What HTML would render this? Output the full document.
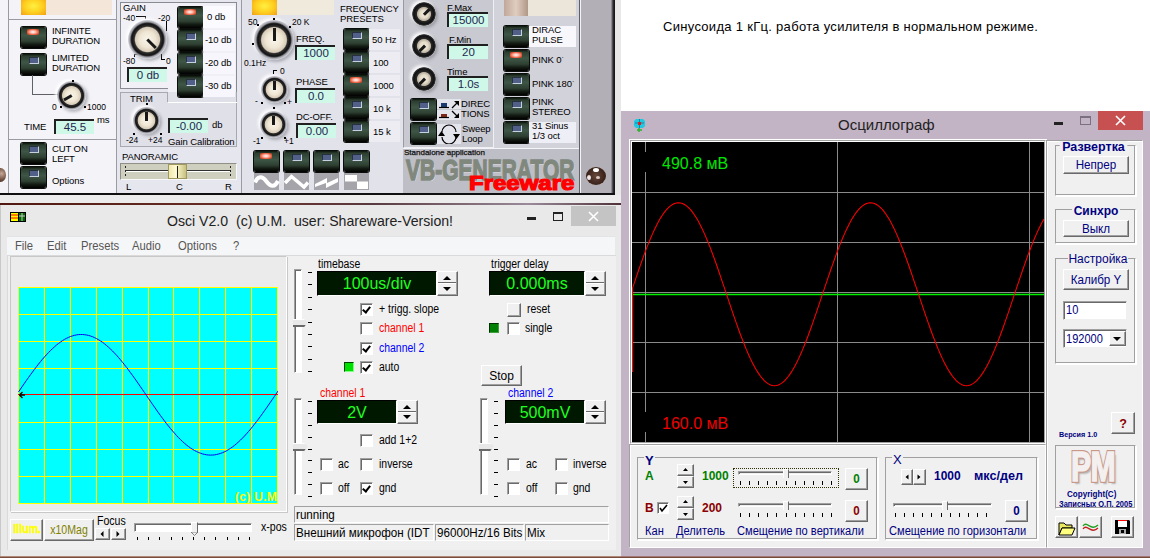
<!DOCTYPE html>
<html><head><meta charset="utf-8">
<style>
*{box-sizing:border-box}
body{margin:0;width:1150px;height:558px;overflow:hidden;position:relative;background:#ececec;font-family:"Liberation Sans",sans-serif}
.a{position:absolute}
.t{position:absolute;white-space:nowrap;line-height:1}
.grp{position:absolute;border:1px solid #a0a0a0;border-right-color:#fff;border-bottom-color:#fff;box-shadow:inset -1px -1px 0 #a0a0a0,1px 1px 0 #fff}
.gtb{font-size:12px;font-weight:bold;color:#000080;background:#f0f0f0}
.gt{font-size:12px;color:#000080;background:#f0f0f0;transform:scaleX(0.925);transform-origin:0 0}
.btn{position:absolute;background:#f0f0f0;border:1px solid #fff;border-right-color:#696969;border-bottom-color:#696969;box-shadow:inset -1px -1px 0 #a0a0a0}
.btn span{position:absolute;left:0;right:0;top:2px;text-align:center;font-size:12px;color:#000080;line-height:1;white-space:nowrap;transform:scaleX(0.97)}
.trk{position:absolute;height:4px;border:1px solid #a0a0a0;border-right-color:#fff;border-bottom-color:#fff;box-shadow:inset 1px 1px 0 #696969}
.thm{position:absolute;width:6px;height:9px;background:#f0f0f0;border:1px solid #fff;border-right-color:#696969;border-bottom:none}
.tck{position:absolute;height:4px;background:repeating-linear-gradient(90deg,#000 0 1px,transparent 1px 9.1px)}
.mn{top:35px;font-size:12.5px;color:#555;transform:scaleX(0.9);transform-origin:0 0}
.lb{font-size:12px;color:#000;transform:scaleX(0.87);transform-origin:0 0}
.wb{position:absolute;background:#f0f0f0;border:1px solid #fff;border-right-color:#696969;border-bottom-color:#696969;box-shadow:inset -1px -1px 0 #a0a0a0}
.wb span{position:absolute;left:0;right:0;top:4px;text-align:center;line-height:1;white-space:nowrap}
.lcd{position:absolute;background:#001800;border:1px solid #000;border-right-color:#fff;border-bottom-color:#fff}
.lcd span{position:absolute;left:0;right:0;top:4px;text-align:center;font-size:16px;color:#20ff20;line-height:1;white-space:nowrap}
.spn{position:absolute;width:21px;background:linear-gradient(180deg,#f0f0f0 0,#f0f0f0 calc(50% - 1px),#696969 calc(50% - 1px),#696969 50%,#fff 50%,#fff calc(50% + 1px),#f0f0f0 calc(50% + 1px));border:1px solid #fff;border-right-color:#696969;border-bottom-color:#696969}
.cb{position:absolute;width:13px;height:13px;background:#fff;border:1px solid #a0a0a0;border-right-color:#fff;border-bottom-color:#fff;box-shadow:inset 1px 1px 0 #696969}
.vs{position:absolute;width:8px;background:#fff;border:1px solid #a0a0a0;border-right-color:#fff;border-bottom-color:#fff;box-shadow:inset 1px 1px 0 #696969}
.vth{position:absolute;width:15px;height:8px;background:linear-gradient(180deg,#fff 0 1px,#e8e8e8 1px 6px,#696969 6px 8px);clip-path:polygon(0 0,70% 0,100% 35%,75% 100%,0 100%)}
.vtk{position:absolute;width:4px}
.sb{position:absolute;overflow:hidden;background:#f0f0f0;border:1px solid #a0a0a0;border-right-color:#fff;border-bottom-color:#fff}
.sb span{position:absolute;left:1px;top:2px;font-size:12px;color:#000;line-height:1;white-space:nowrap;transform:scaleX(0.97);transform-origin:0 0}
.ck::after{content:"";position:absolute;left:3px;top:1px;width:3px;height:6px;border:solid #000;border-width:0 2px 2px 0;transform:rotate(38deg)}
.spn::before,.spn::after{content:"";position:absolute;left:5px;width:0;height:0;border-left:4.5px solid transparent;border-right:4.5px solid transparent}
.spn::before{top:4px;border-bottom:4.5px solid #000}
.spn::after{bottom:4px;border-top:4.5px solid #000}
.spn{box-shadow:inset -1px -1px 0 #a0a0a0}
.vt{font-size:9.5px;color:#000;line-height:10px;letter-spacing:-0.1px}
.vs9{font-size:8.5px;color:#000}
.vbb{position:absolute;width:25px;height:21px;border-radius:2px;background:linear-gradient(180deg,#0c140c 0,#2c3e30 10%,#3e5646 40%,#2e4032 68%,#141c14 82%,#000 100%);box-shadow:0 0 0 1px #0a0e0a}
.vbb::after{content:"";position:absolute;left:8px;top:3px;width:8px;height:5px;background:#506088;border:1px solid #c8d0e0;border-left-color:#283040;border-top-color:#283040}
.vbb.on::after{left:6px;top:2px;width:12px;height:6px;background:radial-gradient(ellipse,#fff 0,#ffb0a0 35%,#e05030 70%,transparent 100%);border:none}
.kn{position:absolute;border-radius:50%;background:radial-gradient(circle closest-side at 50% 50%,#faf6ec 0,#efe6d4 40%,#d8ccb8 62%,#303030 68%,#141414 80%,#2a2a2a 84%,#9a9aa2 90%,rgba(200,200,210,0.6) 100%);box-shadow:-2px -2px 3px rgba(255,255,255,0.9),2px 2px 3px rgba(110,110,120,0.45)}
.kn i{position:absolute;left:50%;top:20%;width:3px;height:32%;margin-left:-1.5px;background:#181818;transform-origin:50% 94%}
.dt{width:2px;height:2px;background:#000}
.vin{position:absolute;background:#d0f8e8;border-left:2px solid #202020;border-top:2px solid #202020}
.vin span{position:absolute;left:0;right:0;top:1px;text-align:center;font-size:11.5px;color:#202850;line-height:1;white-space:nowrap}
.kn.dk{background:radial-gradient(circle closest-side at 50% 50%,#f4eee0 0,#e4dac8 35%,#b8b0a0 55%,#282828 62%,#101010 85%,#3a3a3a 95%,rgba(150,150,160,0.5) 100%)}
</style></head><body>
<!-- VB generator panel -->
<div class="a" style="left:0;top:0;width:621px;height:195px;background:#d9d9e1;overflow:hidden">
 <!-- column backgrounds -->
 <div class="a" style="left:0;top:0;width:8px;height:193px;background:#f4f4f8"></div>
 <div class="a" style="left:8px;top:0;width:109px;height:193px;background:#f3f3f8;border-left:1px solid #9a9aa2;border-right:1px solid #9a9aa2"></div>
 <div class="a" style="left:8px;top:19px;width:109px;height:1px;background:#9a9aa2"></div>
 <div class="a" style="left:8px;top:139px;width:109px;height:1px;background:#9a9aa2"></div>
 <div class="a" style="left:117px;top:0;width:125px;height:193px;background:#e6e6ee"></div>
 <div class="a" style="left:241px;top:0;width:1px;height:193px;background:#9a9aa2"></div>
 <div class="a" style="left:242px;top:0;width:161px;height:193px;background:#e2e2ea"></div>
 <div class="a" style="left:403px;top:0;width:91px;height:148px;background:#c9c9d1;border-left:1px solid #9a9aa2;border-right:1px solid #f0f0f4;border-bottom:1px solid #f0f0f4"></div>
 <div class="a" style="left:403px;top:148px;width:177px;height:45px;background:#bebec6;border-top:1px solid #f4f4f8"></div>
 <div class="a" style="left:494px;top:0;width:86px;height:148px;background:#d2d2da;border-right:1px solid #606068"></div>
 <div class="a" style="left:579px;top:148px;width:1px;height:45px;background:#606068"></div><div class="a" style="left:580px;top:0;width:34px;height:193px;background:linear-gradient(90deg,#f4f4f8 0 1px,#b2b0b6 1px 31px,#8a8a90 31px 32px,#505058 32px 33px,#282828 33px)"></div>
 <div class="a" style="left:614px;top:0;width:1px;height:195px;background:#181818"></div>
 <div class="a" style="left:0;top:193px;width:616px;height:2px;background:#101010"></div>
 <div class="a" style="left:615px;top:0;width:6px;height:195px;background:#e8e8e8"></div>

 <!-- column 1 -->
 <div class="a" style="left:21px;top:0;width:25px;height:15px;background:radial-gradient(ellipse at 50% 40%,#fff040 0,#ffd020 50%,#f0a018 100%)"></div>
 <div class="a" style="left:46px;top:0;width:66px;height:15px;background:#f4e6d8"></div>
 <div class="vbb on" style="left:21px;top:27px"></div>
 <div class="vbb" style="left:21px;top:54px"></div>
 <div class="t vt" style="left:52px;top:26px">INFINITE<br>DURATION</div>
 <div class="t vt" style="left:52px;top:53px">LIMITED<br>DURATION</div>
 <div class="a" style="left:32px;top:75px;width:27px;height:20px;border-left:1px solid #606068;border-bottom:1px solid #606068"></div>
 <div class="kn" style="left:57px;top:81px;width:29px;height:29px"><i style="transform:rotate(-120deg)"></i></div>
 <div class="t vs9" style="left:52px;top:103px">0</div>
 <div class="t vs9" style="left:87px;top:103px">1000</div>
 <div class="a dt" style="left:60px;top:106px"></div><div class="a dt" style="left:84px;top:106px"></div><div class="a dt" style="left:72px;top:80px"></div>
 <div class="t vt" style="left:24px;top:122px">TIME</div>
 <div class="vin" style="left:54px;top:119px;width:40px;height:15px"><span>45.5</span></div>
 <div class="t vt" style="left:97px;top:115px">ms</div>
 <div class="vbb" style="left:21px;top:143px"></div>
 <div class="vbb" style="left:21px;top:167px"></div>
 <div class="t vt" style="left:52px;top:144px">CUT ON<br>LEFT</div>
 <div class="t vt" style="left:52px;top:176px">Options</div>
 <div class="a" style="left:-5px;top:168px;width:11px;height:14px;border-radius:50%;background:radial-gradient(circle at 60% 40%,#c8a898 0,#6a4a3a 60%,#3a2a20 100%)"></div>

 <!-- column 2 -->
 <div class="a" style="left:120px;top:2px;width:117px;height:87px;border:1px solid #8a8a92;border-bottom:none;background:#f0f0f6"></div>
 <div class="a" style="left:120px;top:88px;width:49px;height:1px;background:#8a8a92"></div>
 <div class="a" style="left:168px;top:88px;width:1px;height:14px;background:#8a8a92"></div>
 <div class="a" style="left:168px;top:88px;width:69px;height:14px;background:#f0f0f6;border-right:1px solid #8a8a92"></div>
 <div class="a" style="left:168px;top:101px;width:69px;height:1px;background:#8a8a92"></div>
 <div class="a" style="left:120px;top:92px;width:117px;height:55px;border:1px solid #a8a8b0;border-top:none;background:#e0e0e8"></div>
 <div class="a" style="left:120px;top:92px;width:48px;height:1px;background:#a8a8b0"></div>
 <div class="a" style="left:168px;top:102px;width:69px;height:1px;background:#fff"></div>
 <div class="a" style="left:120px;top:92px;width:48px;height:10px;background:#e0e0e8;border-left:1px solid #a8a8b0;border-top:1px solid #a8a8b0;border-right:1px solid #a8a8b0"></div>
 <div class="t vt" style="left:123px;top:3px">GAIN</div>
 <div class="t vs9" style="left:123px;top:14px">-40</div>
 <div class="t vs9" style="left:158px;top:14px">-20</div>
 <div class="t vs9" style="left:123px;top:57px">-80</div>
 <div class="t vs9" style="left:166px;top:57px">0</div>
 <div class="a" style="left:136px;top:16px;width:10px;height:3px;border-top:1px solid #000;border-right:1px solid #000"></div>
 <div class="a" style="left:166px;top:21px;width:1px;height:10px;background:#000"></div>
 <div class="a" style="left:134px;top:54px;width:4px;height:3px;border-top:1px solid #000;border-left:1px solid #000"></div>
 <div class="a" style="left:161px;top:54px;width:4px;height:6px;border-bottom:1px solid #000;border-left:1px solid #000"></div>
 <div class="kn" style="left:128px;top:20px;width:39px;height:39px"><i style="transform:rotate(135deg)"></i></div>
 <div class="vin" style="left:127px;top:67px;width:40px;height:15px"><span>0 db</span></div>
 <div class="vbb on" style="left:178px;top:7px"></div>
 <div class="vbb" style="left:178px;top:30px"></div>
 <div class="vbb" style="left:178px;top:53px"></div>
 <div class="vbb" style="left:178px;top:76px"></div>
 <div class="a" style="left:203px;top:6px;width:32px;height:22px;background:#fafaff"></div>
 <div class="a" style="left:203px;top:30px;width:32px;height:21px;background:#f6f6fc"></div>
 <div class="a" style="left:203px;top:53px;width:32px;height:21px;background:#f6f6fc"></div>
 <div class="a" style="left:203px;top:76px;width:32px;height:21px;background:#f6f6fc"></div>
 <div class="t vt" style="left:207px;top:12px">0 db</div>
 <div class="t vt" style="left:205px;top:35px">-10 db</div>
 <div class="t vt" style="left:205px;top:58px">-20 db</div>
 <div class="t vt" style="left:205px;top:81px">-30 db</div>
 <div class="t vt" style="left:130px;top:94px">TRIM</div>
 <div class="kn" style="left:133px;top:107px;width:27px;height:27px"><i style="transform:rotate(0deg)"></i></div>
 <div class="a dt" style="left:146px;top:103px"></div><div class="a dt" style="left:133px;top:133px"></div><div class="a dt" style="left:160px;top:133px"></div>
 <div class="t vs9" style="left:126px;top:136px">-24</div>
 <div class="t vs9" style="left:148px;top:136px">+24</div>
 <div class="vin" style="left:168px;top:118px;width:40px;height:15px"><span>-0.00</span></div>
 <div class="t vt" style="left:212px;top:120px">db</div>
 <div class="t vt" style="left:168px;top:137px">Gain Calibration</div>
 <div class="t vt" style="left:122px;top:152px">PANORAMIC</div>
 <div class="a" style="left:120px;top:163px;width:117px;height:17px;background:#cfcfbf;border:1px solid #909088;border-right-color:#f8f8f8;border-bottom-color:#f8f8f8"></div>
 <div class="a" style="left:126px;top:170px;width:104px;height:2px;border-top:1px solid #303030;border-bottom:1px solid #fff"></div>
 <div class="a" style="left:125px;top:166px;width:1px;height:11px;background:repeating-linear-gradient(180deg,#222 0 2px,transparent 2px 4px)"></div>
 <div class="a" style="left:230px;top:166px;width:1px;height:11px;background:repeating-linear-gradient(180deg,#222 0 2px,transparent 2px 4px)"></div>
 <div class="a" style="left:168px;top:164px;width:19px;height:15px;background:linear-gradient(90deg,#f0e8b0,#fffad0 40%,#c8c080);border:1px solid #a09860"></div>
 <div class="a" style="left:177px;top:166px;width:1px;height:12px;background:#202020"></div>
 <div class="t vt" style="left:126px;top:182px">L</div>
 <div class="t vt" style="left:176px;top:182px">C</div>
 <div class="t vt" style="left:225px;top:182px">R</div>

 <!-- column 3 -->
 <div class="a" style="left:252px;top:0;width:25px;height:15px;background:radial-gradient(ellipse at 50% 40%,#fff040 0,#ffd020 50%,#f0a018 100%)"></div>
 <div class="a" style="left:277px;top:0;width:57px;height:15px;background:#f0eadc"></div>
 <div class="kn" style="left:254px;top:20px;width:40px;height:40px"><i style="transform:rotate(0deg)"></i></div>
 <div class="a dt" style="left:273px;top:18px"></div><div class="a dt" style="left:257px;top:24px"></div><div class="a dt" style="left:289px;top:26px"></div><div class="a dt" style="left:252px;top:43px"></div>
 <div class="t vs9" style="left:248px;top:18px">50</div>
 <div class="t vs9" style="left:292px;top:18px">20 K</div>
 <div class="t vs9" style="left:244px;top:59px">0.1Hz</div>
 <div class="t vt" style="left:296px;top:34px">FREQ.</div>
 <div class="vin" style="left:295px;top:45px;width:40px;height:15px"><span>1000</span></div>
 <div class="kn" style="left:261px;top:76px;width:27px;height:27px"><i style="transform:rotate(0deg)"></i></div>
 <div class="t vs9" style="left:280px;top:67px">0</div>
 <div class="a" style="left:273px;top:70px;width:4px;height:4px;border-top:1px solid #000;border-left:1px solid #000"></div>
 <div class="t vs9" style="left:255px;top:97px">-</div><div class="a dt" style="left:261px;top:102px"></div><div class="a dt" style="left:284px;top:102px"></div><div class="t vs9" style="left:287px;top:98px">+</div>
 <div class="t vt" style="left:296px;top:77px">PHASE</div>
 <div class="vin" style="left:295px;top:88px;width:40px;height:15px"><span>0.0</span></div>
 <div class="kn" style="left:260px;top:111px;width:27px;height:27px"><i style="transform:rotate(0deg)"></i></div>
 <div class="a dt" style="left:273px;top:107px"></div><div class="a dt" style="left:261px;top:137px"></div><div class="a dt" style="left:284px;top:137px"></div>
 <div class="t vs9" style="left:253px;top:137px">-1</div><div class="t vs9" style="left:284px;top:137px">+1</div>
 <div class="t vt" style="left:296px;top:112px">DC-OFF.</div>
 <div class="vin" style="left:296px;top:123px;width:40px;height:15px"><span>0.00</span></div>
 <div class="t vt" style="left:340px;top:4px">FREQUENCY<br>PRESETS</div>
 <div class="vbb" style="left:344px;top:29px"></div>
 <div class="vbb" style="left:344px;top:52px"></div>
 <div class="vbb on" style="left:344px;top:75px"></div>
 <div class="vbb" style="left:344px;top:98px"></div>
 <div class="vbb" style="left:344px;top:121px"></div>
 <div class="a" style="left:369px;top:29px;width:31px;height:21px;background:#ececf2"></div>
 <div class="a" style="left:369px;top:52px;width:31px;height:21px;background:#ececf2"></div>
 <div class="a" style="left:369px;top:75px;width:31px;height:21px;background:#ececf2"></div>
 <div class="a" style="left:369px;top:98px;width:31px;height:21px;background:#ececf2"></div>
 <div class="a" style="left:369px;top:121px;width:31px;height:21px;background:#ececf2"></div>
 <div class="t vt" style="left:372px;top:35px">50 Hz</div>
 <div class="t vt" style="left:373px;top:58px">100</div>
 <div class="t vt" style="left:373px;top:81px">1000</div>
 <div class="t vt" style="left:373px;top:104px">10 k</div>
 <div class="t vt" style="left:373px;top:127px">15 k</div>
 <div class="vbb on" style="left:254px;top:151px"></div>
 <div class="vbb" style="left:284px;top:151px"></div>
 <div class="vbb" style="left:314px;top:151px"></div>
 <div class="vbb" style="left:344px;top:151px"></div>
 <svg class="a" style="left:254px;top:173px" width="120" height="18">
  <rect x="0" y="0" width="25" height="17" fill="#a4a4aa"/><rect x="30" y="0" width="25" height="17" fill="#a4a4aa"/><rect x="60" y="0" width="25" height="17" fill="#a4a4aa"/><rect x="90" y="0" width="25" height="17" fill="#a4a4aa"/>
  <path d="M1,9.5 C4,3 8,2.5 12.5,8.5 C17,14.5 21,14 24,8" stroke="#fff" stroke-width="4" fill="none"/>
  <path d="M31,10 L37.5,3.5 L50,14 L54,9.5" stroke="#fff" stroke-width="3.5" fill="none"/>
  <path d="M61,11 L73,5 V10 L84,5 V9 L72,15 V10 L61,14z" fill="#fff"/>
  <path d="M91,2 H103 V8.5 H114 V16 H103 V8.5 H91z" fill="#fff"/>
 </svg>

 <!-- column 4 -->
 <div class="kn dk" style="left:412px;top:2px;width:24px;height:24px"><i style="transform:rotate(45deg)"></i></div>
 <div class="kn dk" style="left:412px;top:34px;width:24px;height:24px"><i style="transform:rotate(-135deg)"></i></div>
 <div class="kn dk" style="left:412px;top:67px;width:24px;height:24px"><i style="transform:rotate(-135deg)"></i></div>
 <div class="t vt" style="left:447px;top:3px">F.Max</div>
 <div class="vin" style="left:447px;top:12px;width:41px;height:15px"><span>15000</span></div>
 <div class="t vt" style="left:449px;top:35px">F.Min</div>
 <div class="vin" style="left:447px;top:44px;width:41px;height:15px"><span>20</span></div>
 <div class="t vt" style="left:447px;top:67px">Time</div>
 <div class="vin" style="left:447px;top:76px;width:41px;height:15px"><span>1.0s</span></div>
 <div class="vbb" style="left:411px;top:99px"></div>
 <div class="vbb" style="left:411px;top:123px"></div>
 
 
 <svg class="a" style="left:437px;top:99px" width="24" height="45">
  <rect x="0" y="0" width="24" height="10" fill="#e4e4ec"/><rect x="0" y="11" width="24" height="10" fill="#e4e4ec"/>
  <rect x="4" y="4" width="6" height="4" fill="#1a3a70"/><path d="M2,8.5 H12" stroke="#000" stroke-width="1.2"/>
  <rect x="4" y="15" width="6" height="3" fill="#802818"/><path d="M2,18.5 H12" stroke="#000" stroke-width="1.2"/>
  <path d="M15,9 L21,3" stroke="#000" stroke-width="1.3"/><path d="M17,2 H22 V7z" fill="#000"/>
  <path d="M15,12 L21,18" stroke="#000" stroke-width="1.3"/><path d="M22,14 V19 H17z" fill="#000"/>
  <rect x="0" y="25" width="24" height="20" fill="#e4e4ec"/>
  <path d="M5,33 A7,7 0 0 1 19,33 M19,38 A7,7 0 0 1 5,38" stroke="#000" stroke-width="1.2" fill="none"/>
  <path d="M16,35 H23 L19.5,40z M1,37 H8 L4.5,32z" fill="#000"/>
 </svg>
 <div class="t vt" style="left:461px;top:99px">DIREC<br>TIONS</div>
 <div class="t vt" style="left:462px;top:124px">Sweep<br>Loop</div>
 <div class="t" style="left:404px;top:149px;font-size:8px;color:#101010;letter-spacing:0px;-webkit-text-stroke:0.25px #101010">Standalone application</div>
 <div class="t" id="vbg" style="left:406px;top:155px;font-size:30px;font-weight:bold;color:#80887e;letter-spacing:0px;transform:scaleX(0.70);transform-origin:0 0;-webkit-text-stroke:1.6px #80887e;text-shadow:1px 1px 0 #eeeef0">VB-GENERATOR</div>
 <div class="t" id="fw" style="left:469px;top:173px;font-size:20px;font-weight:bold;color:#ff0000;transform:scaleX(1.2);transform-origin:0 0;-webkit-text-stroke:1.2px #ff0000">Freeware</div>

 <!-- column 5 -->
 <div class="a" style="left:504px;top:0;width:24px;height:16px;background:linear-gradient(90deg,#c0a898,#e0ccc0 50%,#b09888)"></div>
 <div class="a" style="left:528px;top:0;width:48px;height:16px;background:#ece6da"></div>
 <div class="vbb" style="left:504px;top:26px"></div>
 <div class="vbb on" style="left:504px;top:50px"></div>
 <div class="vbb" style="left:504px;top:74px"></div>
 <div class="vbb" style="left:504px;top:98px"></div>
 <div class="vbb" style="left:504px;top:122px"></div>
 <div class="a" style="left:529px;top:26px;width:47px;height:21px;background:#f8f8fc"></div>
 <div class="a" style="left:529px;top:122px;width:47px;height:21px;background:#eeeef6"></div>
 <div class="t vt" style="left:532px;top:25px">DIRAC<br>PULSE</div>
 <div class="t vt" style="left:532px;top:55px">PINK 0<span style="position:relative;top:-3px;font-size:7px">·</span></div>
 <div class="t vt" style="left:532px;top:79px">PINK 180<span style="position:relative;top:-3px;font-size:7px">·</span></div>
 <div class="t vt" style="left:532px;top:97px">PINK<br>STEREO</div>
 <div class="t vt" style="left:532px;top:121px">31 Sinus<br>1/3 oct</div>
 <div class="a" style="left:586px;top:167px;width:20px;height:18px;border-radius:50%;background:radial-gradient(circle at 50% 50%,#6a4a3a 0,#4a3028 40%,#3a2218 70%,#806050 100%)"></div><div class="a" style="left:593px;top:168px;width:6px;height:4px;border-radius:50%;background:#fff"></div><div class="a" style="left:587px;top:175px;width:4px;height:5px;border-radius:50%;background:#f0e8e8"></div><div class="a" style="left:596px;top:176px;width:4px;height:3px;border-radius:50%;background:#d8c8c0"></div>
</div>

<!-- gap strip -->
<div class="a" style="left:0;top:195px;width:621px;height:8px;background:#ececec"></div>
<div class="a" style="left:0;top:203px;width:621px;height:2px;background:linear-gradient(90deg,#501810,#6a3028 40%,#5a3a40 60%,#9a8a9a 85%,#503038)"></div>
<!-- Osci window -->
<div class="a" style="left:0;top:205px;width:621px;height:351px;background:#e9e9e9;box-shadow:inset 1px 0 0 #c8c8c8">
 <svg class="a" style="left:10px;top:7px" width="16" height="10"><rect width="16" height="10" fill="#000"/><rect x="1" y="1" width="7" height="8" fill="#ff0"/><path d="M1,3h7M1,6h7" stroke="#f00" stroke-width="1"/><rect x="9" y="1" width="6" height="8" fill="#060"/><path d="M9,4h6M12,1v8" stroke="#ccc" stroke-width="1"/></svg>
 <div class="t" style="left:167px;top:8px;font-size:15px;color:#222;transform:scaleX(0.94);transform-origin:0 0">Osci V2.0&nbsp; (c) U.M.&nbsp; user: Shareware-Version!</div>
 <div class="a" style="left:527px;top:12px;width:9px;height:3px;background:#222"></div>
 <div class="a" style="left:553px;top:7px;width:10px;height:9px;border:1px solid #222;border-top-width:2px"></div>
 <div class="a" style="left:571px;top:1px;width:45px;height:20px;background:#c4c4c4"></div>
 <svg class="a" style="left:571px;top:1px" width="45" height="20"><path d="M18,6 L27,15 M27,6 L18,15" stroke="#fff" stroke-width="1.6"/></svg>
 <!-- menu -->
 <div class="a" style="left:7px;top:31px;width:608px;height:19px;background:#f5f6f7;border-top:1px solid #e4e4e4"></div>
 <div class="t mn" style="left:15px">File</div>
 <div class="t mn" style="left:47px">Edit</div>
 <div class="t mn" style="left:81px">Presets</div>
 <div class="t mn" style="left:132px">Audio</div>
 <div class="t mn" style="left:178px">Options</div>
 <div class="t mn" style="left:233px">?</div>
 <!-- client -->
 <div class="a" style="left:7px;top:50px;width:609px;height:295px;background:#f0f0f0;border-left:1px solid #dadada;border-top:1px solid #dadada"></div>
 <!-- scope panel -->
 <div class="a" style="left:10px;top:51px;width:277px;height:256px;background:#ebebeb;border:1px solid #c8c8c8;border-right-color:#fff;border-bottom-color:#fff;box-shadow:1px 1px 0 #c8c8c8"></div>
 <div class="a" style="left:18px;top:82px;width:260px;height:217px;background:#00ffff;overflow:hidden">
  <svg width="260" height="217" style="position:absolute;left:0;top:0">
   <g stroke="#ffff00" stroke-width="1.2" fill="none">
    <path d="M0.5,0 V217 M26.5,0 V217 M52.5,0 V217 M78.5,0 V217 M104.5,0 V217 M130.5,0 V217 M155.5,0 V217 M181.5,0 V217 M207.5,0 V217 M233.5,0 V217 M259.5,0 V217"/>
    <path d="M0,0.5 H260 M0,27.5 H260 M0,54.5 H260 M0,81.5 H260 M0,135.5 H260 M0,162.5 H260 M0,189.5 H260 M0,216.5 H260"/>
   </g>
   <path d="M0,107.5 H260" stroke="#ff0000" stroke-width="1.1"/>
   <path d="M1,108 h6 M1.5,108 l3,-3 M1.5,108 l3,3" stroke="#000" stroke-width="1.3"/>
   <path d="M0.5,104.9 L2.5,102.0 L4.5,99.1 L6.5,96.2 L8.5,93.3 L10.5,90.5 L12.5,87.7 L14.5,85.0 L16.5,82.3 L18.5,79.7 L20.5,77.1 L22.5,74.6 L24.5,72.2 L26.5,69.9 L28.5,67.7 L30.5,65.6 L32.5,63.5 L34.5,61.6 L36.5,59.8 L38.5,58.0 L40.5,56.5 L42.5,55.0 L44.5,53.6 L46.5,52.4 L48.5,51.3 L50.5,50.4 L52.5,49.5 L54.5,48.9 L56.5,48.3 L58.5,47.9 L60.5,47.6 L62.5,47.5 L64.5,47.5 L66.5,47.7 L68.5,48.0 L70.5,48.4 L72.5,49.0 L74.5,49.7 L76.5,50.6 L78.5,51.6 L80.5,52.7 L82.5,54.0 L84.5,55.3 L86.5,56.8 L88.5,58.5 L90.5,60.2 L92.5,62.1 L94.5,64.0 L96.5,66.1 L98.5,68.2 L100.5,70.5 L102.5,72.8 L104.5,75.3 L106.5,77.8 L108.5,80.3 L110.5,83.0 L112.5,85.7 L114.5,88.4 L116.5,91.2 L118.5,94.0 L120.5,96.9 L122.5,99.8 L124.5,102.7 L126.5,105.6 L128.5,108.5 L130.5,111.5 L132.5,114.4 L134.5,117.3 L136.5,120.1 L138.5,123.0 L140.5,125.8 L142.5,128.6 L144.5,131.3 L146.5,134.0 L148.5,136.6 L150.5,139.1 L152.5,141.6 L154.5,143.9 L156.5,146.2 L158.5,148.5 L160.5,150.6 L162.5,152.6 L164.5,154.5 L166.5,156.3 L168.5,158.0 L170.5,159.5 L172.5,161.0 L174.5,162.3 L176.5,163.5 L178.5,164.5 L180.5,165.5 L182.5,166.2 L184.5,166.9 L186.5,167.4 L188.5,167.8 L190.5,168.0 L192.5,168.1 L194.5,168.0 L196.5,167.9 L198.5,167.5 L200.5,167.0 L202.5,166.4 L204.5,165.7 L206.5,164.8 L208.5,163.8 L210.5,162.6 L212.5,161.3 L214.5,159.9 L216.5,158.4 L218.5,156.7 L220.5,154.9 L222.5,153.1 L224.5,151.1 L226.5,149.0 L228.5,146.8 L230.5,144.5 L232.5,142.2 L234.5,139.7 L236.5,137.2 L238.5,134.6 L240.5,132.0 L242.5,129.3 L244.5,126.5 L246.5,123.7 L248.5,120.9 L250.5,118.0 L252.5,115.1 L254.5,112.2 L256.5,109.3 L258.5,106.3 L260.5,103.4" stroke="#0000f0" stroke-width="1.0" fill="none"/>
  </svg>
  <div class="t" style="left:217px;top:204px;font-size:12px;font-weight:bold;color:#ffff00;letter-spacing:0.3px">(c) U.M</div>
 </div>
 <!-- bottom buttons -->
 <div class="wb" style="left:10px;top:314px;width:33px;height:22px"><span style="color:#ffff00;font-weight:bold;font-size:12.5px;transform:scaleX(0.85);-webkit-text-stroke:0.4px #ffff00;top:3px">Illum.</span></div>
 <div class="wb" style="left:44px;top:314px;width:50px;height:22px"><span style="color:#808000;font-size:12px;transform:scaleX(0.88)">x10Mag</span></div>
 <div class="t" style="left:97px;top:310px;font-size:12px;color:#000;transform:scaleX(0.88);transform-origin:0 0">Focus</div>
 <div class="wb" style="left:95px;top:323px;width:15px;height:12px"></div>
 <div class="wb" style="left:111px;top:323px;width:15px;height:12px"></div>
 <svg class="a" style="left:95px;top:323px" width="31" height="12"><path d="M8.5,3 v6 l-3,-3z M21.5,3 v6 l3,-3z" fill="#000"/></svg>
 <div class="a" style="left:134px;top:318px;width:118px;height:9px;background:#fff;border:1px solid #a0a0a0;border-right-color:#fff;border-bottom-color:#fff;box-shadow:inset 1px 1px 0 #696969"></div>
 <div class="a" style="left:191px;top:317px;width:7px;height:11px;background:#f0f0f0;border:1px solid #fff;border-right-color:#696969"></div>
 <svg class="a" style="left:191px;top:327px" width="7" height="4"><path d="M0,0 H7 L3.5,3.5z" fill="#f0f0f0" stroke="#696969" stroke-width="0.8"/></svg>
 <div class="a" style="left:137px;top:332px;width:114px;height:3px;background:repeating-linear-gradient(90deg,#000 0 1px,transparent 1px 11.2px)"></div>
 <div class="t" style="left:261px;top:316px;font-size:12px;color:#000;transform:scaleX(0.88);transform-origin:0 0">x-pos</div>
 <!-- vertical slider timebase -->
 <div class="vs" style="left:294px;top:64px;height:104px"></div>
 <div class="vth" style="left:293px;top:114px"></div>
 <div class="vtk" style="left:308px;top:67px;height:104px;background:repeating-linear-gradient(180deg,#000 0 1px,transparent 1px 12.4px)"></div>
 <div class="t lb" style="left:318px;top:53px">timebase</div>
 <div class="lcd" style="left:317px;top:66px;width:120px;height:25px"><span>100us/div</span></div>
 <div class="spn" style="left:437px;top:66px;height:25px"></div>
 <div class="cb ck" style="left:360px;top:98px"></div><div class="t lb" style="left:379px;top:98px">+ trigg. slope</div>
 <div class="cb" style="left:360px;top:117px"></div><div class="t lb" style="left:379px;top:117px;color:#ff0000">channel 1</div>
 <div class="cb ck" style="left:360px;top:137px"></div><div class="t lb" style="left:379px;top:137px;color:#0000ff">channel 2</div>
 <div class="a" style="left:344px;top:157px;width:10px;height:10px;background:#00e000;border:1px solid #004000;border-right-color:#80ff80;border-bottom-color:#80ff80"></div>
 <div class="cb ck" style="left:360px;top:156px"></div><div class="t lb" style="left:379px;top:156px">auto</div>
 <div class="t lb" style="left:491px;top:53px">trigger delay</div>
 <div class="lcd" style="left:489px;top:66px;width:96px;height:25px"><span>0.000ms</span></div>
 <div class="spn" style="left:585px;top:66px;height:25px"></div>
 <div class="wb" style="left:507px;top:98px;width:14px;height:14px"></div><div class="t lb" style="left:527px;top:98px">reset</div>
 <div class="a" style="left:489px;top:118px;width:10px;height:10px;background:#008000;border:1px solid #003000;border-right-color:#40a040;border-bottom-color:#40a040"></div>
 <div class="cb" style="left:507px;top:117px"></div><div class="t lb" style="left:525px;top:117px">single</div>
 <div class="wb" style="left:481px;top:160px;width:41px;height:21px"><span style="font-size:12px;color:#000;top:4px">Stop</span></div>
 <!-- channel 1 -->
 <div class="t lb" style="left:320px;top:182px;color:#ff0000">channel 1</div>
 <div class="vs" style="left:294px;top:193px;height:97px"></div>
 <div class="vth" style="left:293px;top:238px"></div>
 <div class="vtk" style="left:308px;top:196px;height:97px;background:repeating-linear-gradient(180deg,#000 0 1px,transparent 1px 11.9px)"></div>
 <div class="lcd" style="left:317px;top:195px;width:80px;height:24px"><span>2V</span></div>
 <div class="spn" style="left:397px;top:195px;height:24px"></div>
 <div class="cb" style="left:360px;top:229px"></div><div class="t lb" style="left:379px;top:229px">add 1+2</div>
 <div class="cb" style="left:320px;top:253px"></div><div class="t lb" style="left:338px;top:253px">ac</div>
 <div class="cb" style="left:360px;top:253px"></div><div class="t lb" style="left:379px;top:253px">inverse</div>
 <div class="cb" style="left:320px;top:277px"></div><div class="t lb" style="left:338px;top:277px">off</div>
 <div class="cb ck" style="left:360px;top:277px"></div><div class="t lb" style="left:379px;top:277px">gnd</div>
 <!-- channel 2 -->
 <div class="t lb" style="left:508px;top:182px;color:#0000ff">channel 2</div>
 <div class="vs" style="left:480px;top:193px;height:97px"></div>
 <div class="vth" style="left:479px;top:238px"></div>
 <div class="vtk" style="left:494px;top:196px;height:97px;background:repeating-linear-gradient(180deg,#000 0 1px,transparent 1px 11.9px)"></div>
 <div class="lcd" style="left:505px;top:195px;width:80px;height:24px"><span>500mV</span></div>
 <div class="spn" style="left:585px;top:195px;height:24px"></div>
 <div class="cb" style="left:507px;top:253px"></div><div class="t lb" style="left:526px;top:253px">ac</div>
 <div class="cb" style="left:555px;top:253px"></div><div class="t lb" style="left:573px;top:253px">inverse</div>
 <div class="cb" style="left:507px;top:277px"></div><div class="t lb" style="left:526px;top:277px">off</div>
 <div class="cb" style="left:555px;top:277px"></div><div class="t lb" style="left:573px;top:277px">gnd</div>
 <!-- status -->
 <div class="sb" style="left:294px;top:301px;width:315px;height:17px"><span>running</span></div>
 <div class="sb" style="left:294px;top:319px;width:140px;height:17px"><span>Внешний микрофон (IDT</span></div>
 <div class="sb" style="left:435px;top:319px;width:89px;height:17px"><span>96000Hz/16 Bits</span></div>
 <div class="sb" style="left:525px;top:319px;width:84px;height:17px"><span>Mix</span></div>
</div>

<div class="a" style="left:0;top:556px;width:621px;height:2px;background:linear-gradient(180deg,#b08878 0 1px,#7a4a38 1px)"></div>
<!-- doc -->
<div class="a" style="left:621px;top:0;width:529px;height:111px;background:#fff"></div>
<div class="t" id="doctext" style="left:663px;top:20px;font-size:13px;color:#000;letter-spacing:0.3px">Синусоида 1 кГц. работа усилителя в нормальном режиме.</div>
<!-- Oscillograph -->
<div class="a" style="left:621px;top:111px;width:529px;height:445px;background:#c2b3c5">
 <!-- icon -->
 <svg class="a" style="left:12px;top:7px" width="13" height="15" viewBox="0 0 13 15">
  <path d="M3,1 h7 l2,2 v5 l-2,2 h-7 l-2,-2 v-5z" fill="#20c8e0"/>
  <path d="M2,5 h9 M6.5,1 v9" stroke="#1880a0" stroke-width="1"/>
  <rect x="5" y="4" width="3" height="3" fill="#e02020"/>
  <path d="M6,10 v4 M4,12 h5" stroke="#30b030" stroke-width="1.5"/>
 </svg>
 <div class="t" style="left:217px;top:6px;font-size:15px;color:#222">Осциллограф</div>
 <div class="a" style="left:433px;top:11px;width:9px;height:3px;background:#222"></div>
 <div class="a" style="left:459px;top:5px;width:11px;height:9px;border:1px solid #7a7080;border-top-width:2px"></div>
 <div class="a" style="left:477px;top:0;width:45px;height:19px;background:#c75050"></div>
 <svg class="a" style="left:477px;top:0" width="45" height="19"><path d="M18,5 L27,14 M27,5 L18,14" stroke="#fff" stroke-width="1.6"/></svg>

 <!-- scope frame -->
 <div class="a" style="left:8px;top:28px;width:418px;height:307px;background:#f0f0f0;border-left:1px solid #fff;border-top:1px solid #fff"></div>
 <div class="a" style="left:9px;top:29px;width:416px;height:304px;border:1px solid #a0a0a0;border-right-color:#fff;border-bottom-color:#fff"></div>
 <div class="a" style="left:10px;top:30px;width:414px;height:302px;border:1px solid #fff;border-right-color:#a0a0a0;border-bottom-color:#a0a0a0"></div>
 <div class="a" style="left:11px;top:31px;width:412px;height:300px;background:#000;overflow:hidden">
  <svg width="412" height="300" style="position:absolute;left:0;top:0">
   <g stroke="#8a8a8a" stroke-width="1" fill="none">
    <path d="M13.5,0 V10 M13.5,30 V270 M13.5,290 V300"/>
    <path d="M205.5,0 V300 M397.5,0 V300"/>
    <path d="M0,50.5 H412 M0,100.5 H412 M0,150.5 H412 M0,200.5 H412 M0,250.5 H412"/>
   </g>
   <path d="M0,152.5 H412" stroke="#00f000" stroke-width="1.3"/>
   <path d="M0.5,230 L0.5,146.2 L2.5,140.3 L4.5,134.3 L6.5,128.5 L8.5,122.8 L10.5,117.2 L12.5,111.7 L14.5,106.4 L16.5,101.4 L18.5,96.5 L20.5,91.9 L22.5,87.5 L24.5,83.4 L26.5,79.6 L28.5,76.1 L30.5,73.0 L32.5,70.1 L34.5,67.7 L36.5,65.6 L38.5,63.8 L40.5,62.5 L42.5,61.5 L44.5,60.9 L46.5,60.7 L48.5,60.9 L50.5,61.5 L52.5,62.5 L54.5,63.8 L56.5,65.6 L58.5,67.7 L60.5,70.1 L62.5,73.0 L64.5,76.1 L66.5,79.6 L68.5,83.4 L70.5,87.5 L72.5,91.9 L74.5,96.5 L76.5,101.4 L78.5,106.4 L80.5,111.7 L82.5,117.2 L84.5,122.8 L86.5,128.5 L88.5,134.3 L90.5,140.3 L92.5,146.2 L94.5,152.2 L96.5,158.2 L98.5,164.1 L100.5,170.1 L102.5,175.9 L104.5,181.6 L106.5,187.2 L108.5,192.7 L110.5,197.9 L112.5,203.0 L114.5,207.9 L116.5,212.5 L118.5,216.9 L120.5,221.0 L122.5,224.8 L124.5,228.3 L126.5,231.4 L128.5,234.3 L130.5,236.7 L132.5,238.8 L134.5,240.6 L136.5,241.9 L138.5,242.9 L140.5,243.5 L142.5,243.7 L144.5,243.5 L146.5,242.9 L148.5,241.9 L150.5,240.6 L152.5,238.8 L154.5,236.7 L156.5,234.3 L158.5,231.4 L160.5,228.3 L162.5,224.8 L164.5,221.0 L166.5,216.9 L168.5,212.5 L170.5,207.9 L172.5,203.0 L174.5,198.0 L176.5,192.7 L178.5,187.2 L180.5,181.6 L182.5,175.9 L184.5,170.1 L186.5,164.1 L188.5,158.2 L190.5,152.2 L192.5,146.2 L194.5,140.3 L196.5,134.3 L198.5,128.5 L200.5,122.8 L202.5,117.2 L204.5,111.7 L206.5,106.4 L208.5,101.4 L210.5,96.5 L212.5,91.9 L214.5,87.5 L216.5,83.4 L218.5,79.6 L220.5,76.1 L222.5,73.0 L224.5,70.1 L226.5,67.7 L228.5,65.6 L230.5,63.8 L232.5,62.5 L234.5,61.5 L236.5,60.9 L238.5,60.7 L240.5,60.9 L242.5,61.5 L244.5,62.5 L246.5,63.8 L248.5,65.6 L250.5,67.7 L252.5,70.1 L254.5,73.0 L256.5,76.1 L258.5,79.6 L260.5,83.4 L262.5,87.5 L264.5,91.9 L266.5,96.5 L268.5,101.4 L270.5,106.5 L272.5,111.7 L274.5,117.2 L276.5,122.8 L278.5,128.5 L280.5,134.3 L282.5,140.3 L284.5,146.2 L286.5,152.2 L288.5,158.2 L290.5,164.1 L292.5,170.1 L294.5,175.9 L296.5,181.6 L298.5,187.2 L300.5,192.7 L302.5,197.9 L304.5,203.0 L306.5,207.9 L308.5,212.5 L310.5,216.9 L312.5,221.0 L314.5,224.8 L316.5,228.3 L318.5,231.4 L320.5,234.3 L322.5,236.7 L324.5,238.8 L326.5,240.6 L328.5,241.9 L330.5,242.9 L332.5,243.5 L334.5,243.7 L336.5,243.5 L338.5,242.9 L340.5,241.9 L342.5,240.6 L344.5,238.8 L346.5,236.7 L348.5,234.3 L350.5,231.4 L352.5,228.3 L354.5,224.8 L356.5,221.0 L358.5,216.9 L360.5,212.5 L362.5,207.9 L364.5,203.0 L366.5,197.9 L368.5,192.7 L370.5,187.2 L372.5,181.6 L374.5,175.9 L376.5,170.1 L378.5,164.1 L380.5,158.2 L382.5,152.2 L384.5,146.2 L386.5,140.3 L388.5,134.3 L390.5,128.5 L392.5,122.8 L394.5,117.2 L396.5,111.7 L398.5,106.5 L400.5,101.4 L402.5,96.5 L404.5,91.9 L406.5,87.5 L408.5,83.4 L410.5,79.6 L412.0,77.0" stroke="#ff0000" stroke-width="1.05" fill="none"/>
  </svg>
  <div class="t" style="left:30px;top:12px;font-size:16px;color:#00e800;background:#000;padding:2px 0">490.8 мВ</div>
  <div class="t" style="left:30px;top:272px;font-size:16px;color:#f00000;background:#000;padding:2px 0">160.0 мВ</div>
 </div>
 <!-- right panel -->
 <div class="a" style="left:425px;top:29px;width:97px;height:408px;background:#f0f0f0;border-left:1px solid #a0a0a0;border-top:1px solid #a0a0a0;border-right:1px solid #fff;border-bottom:1px solid #fff"></div>
 <div class="a" style="left:426px;top:30px;width:95px;height:406px;border-left:1px solid #fff;border-top:1px solid #fff"></div>
 <!-- group Развертка -->
 <div class="grp" style="left:434px;top:34px;width:81px;height:51px"></div>
 <div class="t gtb" style="left:440px;top:30px;width:65px;text-align:center;transform:scaleX(1.04)">Развертка</div>
 <div class="btn" style="left:442px;top:45px;width:66px;height:18px"><span>Непрер</span></div>
 <div class="grp" style="left:434px;top:98px;width:81px;height:35px"></div>
 <div class="t gtb" style="left:451px;top:94px;width:48px;text-align:center">Синхро</div>
 <div class="btn" style="left:442px;top:109px;width:66px;height:17px"><span>Выкл</span></div>
 <div class="grp" style="left:434px;top:147px;width:81px;height:106px"></div>
 <div class="t gt" style="left:447px;top:142px;width:60px;text-align:center;transform:scaleX(1.0)">Настройка</div>
 <div class="btn" style="left:442px;top:158px;width:66px;height:21px"><span style="top:4px">Калибр Y</span></div>
 <div class="a" style="left:442px;top:190px;width:64px;height:19px;background:#fff;border:1px solid #a0a0a0;border-right-color:#f0f0f0;border-bottom-color:#f0f0f0;box-shadow:inset 1px 1px 0 #696969"></div>
 <div class="t" style="left:445px;top:193px;font-size:12px;color:#000080;transform:scaleX(0.92);transform-origin:0 0">10</div>
 <div class="a" style="left:442px;top:218px;width:64px;height:19px;background:#fff;border:1px solid #a0a0a0;border-right-color:#f0f0f0;border-bottom-color:#f0f0f0;box-shadow:inset 1px 1px 0 #696969"></div>
 <div class="t" style="left:445px;top:222px;font-size:12px;color:#000080;transform:scaleX(0.92);transform-origin:0 0">192000</div>
 <div class="btn" style="left:488px;top:220px;width:17px;height:15px"></div>
 <svg class="a" style="left:492px;top:226px" width="9" height="5"><path d="M0,0 H8 L4,4z" fill="#000"/></svg>
 <div class="btn" style="left:490px;top:301px;width:24px;height:22px"><span style="color:#8b0000;font-weight:bold;top:4px;font-size:13px">?</span></div>
 <div class="t" id="ver" style="left:438px;top:320px;font-size:8px;font-weight:bold;color:#000080;transform:scaleX(0.9);transform-origin:0 0">Версия 1.0</div>
 <div class="grp" style="left:434px;top:334px;width:81px;height:64px"></div>
 <div class="t" style="left:450px;top:335px;font-size:42px;font-weight:bold;color:#c89888;-webkit-text-stroke:4px #c89888;letter-spacing:-1px;transform:scaleX(0.72);transform-origin:0 0;text-shadow:3px 3px 2px #b0b0b0">PM</div><div class="t" id="pm" style="left:450px;top:335px;font-size:42px;font-weight:bold;color:#f4f0f0;-webkit-text-stroke:1.5px #f4f0f0;letter-spacing:-1px;transform:scaleX(0.72);transform-origin:0 0">PM</div>
 <div class="t" style="left:446px;top:379px;font-size:8.5px;font-weight:bold;color:#000080;transform:scaleX(0.95);transform-origin:0 0">Copyright(C)</div>
 <div class="t" style="left:438px;top:389px;font-size:8.5px;font-weight:bold;color:#000080;transform:scaleX(0.88);transform-origin:0 0">Записных О.П. 2005</div>
 <div class="btn" style="left:434px;top:405px;width:23px;height:22px"></div>
 <div class="btn" style="left:458px;top:405px;width:23px;height:22px"></div>
 <div class="btn" style="left:490px;top:405px;width:23px;height:22px"></div>
 <svg class="a" style="left:437px;top:408px" width="18" height="17"><path d="M1,4 h5 l2,2 h6 v3 h-10 l-3,7 h-0z" fill="#e8e860" stroke="#000" stroke-width="1"/><path d="M1,16 l3,-7 h13 l-3,7z" fill="#ffff80" stroke="#000" stroke-width="1"/></svg>
 <svg class="a" style="left:461px;top:409px" width="18" height="15"><path d="M1,6 C5,0 9,12 16,5" stroke="#20a020" fill="none" stroke-width="1.3"/><path d="M1,9 C5,3 9,15 16,8" stroke="#c02020" fill="none" stroke-width="1.3"/></svg>
 <svg class="a" style="left:493px;top:408px" width="17" height="16"><path d="M1,1 h14 l1,1 v13 h-15z" fill="#000"/><rect x="4" y="1" width="9" height="7" fill="#fff"/><rect x="4" y="1" width="9" height="1" fill="#f00"/><rect x="5" y="10" width="7" height="5" fill="#aaa"/><rect x="7" y="11" width="3" height="3" fill="#000"/></svg>

 <!-- bottom panel -->
 <div class="a" style="left:8px;top:333px;width:417px;height:104px;background:#f0f0f0;border:1px solid #a0a0a0;border-right-color:#fff;border-bottom-color:#fff"></div>
 <div class="a" style="left:9px;top:334px;width:415px;height:102px;border-left:1px solid #fff;border-top:1px solid #fff"></div>
 <div class="grp" style="left:16px;top:346px;width:241px;height:83px"></div>
 <div class="t gtb" style="left:23px;top:343px;padding:0 1px;font-size:13px">Y</div>
 <div class="t" style="left:24px;top:359px;font-size:12px;font-weight:bold;color:#008000">A</div>
 <div class="t" style="left:24px;top:391px;font-size:12px;font-weight:bold;color:#8b0000">B</div>
 <div class="a" style="left:36px;top:391px;width:12px;height:12px;background:#fff;border:1px solid #a0a0a0;border-right-color:#fff;border-bottom-color:#fff;box-shadow:inset 1px 1px 0 #696969"></div>
 <svg class="a" style="left:38px;top:393px" width="9" height="9"><path d="M1,4 L3,7 L8,1" stroke="#000" stroke-width="1.6" fill="none"/></svg>
 <div class="btn" style="left:56px;top:353px;width:17px;height:12px"></div>
 <div class="btn" style="left:56px;top:365px;width:17px;height:12px"></div>
 <div class="btn" style="left:56px;top:385px;width:17px;height:12px"></div>
 <div class="btn" style="left:56px;top:397px;width:17px;height:12px"></div>
 <svg class="a" style="left:56px;top:353px" width="17" height="56"><path d="M6,7 h5 l-2.5,-3z M6,17 h5 l-2.5,3z M6,39 h5 l-2.5,-3z M6,49 h5 l-2.5,3z" fill="#000"/></svg>
 <div class="t" style="left:81px;top:359px;font-size:12px;font-weight:bold;color:#008000">1000</div>
 <div class="t" style="left:81px;top:391px;font-size:12px;font-weight:bold;color:#8b0000">200</div>
 <div class="a" style="left:112px;top:357px;width:106px;height:20px;border:1px dotted #303000"></div>
 <div class="trk" style="left:117px;top:360px;width:94px"></div>
 <div class="thm" style="left:162px;top:358px"></div>
 <div class="tck" style="left:119px;top:370px;width:93px"></div>
 <div class="trk" style="left:117px;top:392px;width:94px"></div>
 <div class="thm" style="left:162px;top:390px"></div>
 <div class="tck" style="left:119px;top:402px;width:93px"></div>
 <div class="btn" style="left:224px;top:357px;width:23px;height:22px"><span style="color:#008000;font-weight:bold;top:4px">0</span></div>
 <div class="btn" style="left:224px;top:389px;width:23px;height:22px"><span style="color:#8b0000;font-weight:bold;top:4px">0</span></div>
 <div class="t gt" style="left:24px;top:414px">Кан</div>
 <div class="t gt" style="left:55px;top:414px">Делитель</div>
 <div class="t gt" style="left:116px;top:414px">Смещение по вертикали</div>

 <div class="grp" style="left:264px;top:346px;width:153px;height:83px"></div>
 <div class="t gtb" style="left:271px;top:342px;padding:0 1px;font-size:13px;font-weight:normal">X</div>
 <div class="btn" style="left:280px;top:358px;width:12px;height:16px"></div>
 <div class="btn" style="left:292px;top:358px;width:13px;height:16px"></div>
 <svg class="a" style="left:280px;top:358px" width="25" height="16"><path d="M7.5,5.5 v5 l-3,-2.5z M16.5,5.5 v5 l3,-2.5z" fill="#000"/></svg>
 <div class="t" style="left:313px;top:359px;font-size:12px;font-weight:bold;color:#000080">1000</div>
 <div class="t" style="left:353px;top:359px;font-size:12px;font-weight:bold;color:#000080;transform:scaleX(1.05);transform-origin:0 0">мкс/дел</div>
 <div class="trk" style="left:272px;top:392px;width:99px"></div>
 <div class="thm" style="left:321px;top:390px"></div>
 <div class="tck" style="left:274px;top:402px;width:98px"></div>
 <div class="btn" style="left:384px;top:389px;width:23px;height:22px"><span style="color:#000080;font-weight:bold;top:4px">0</span></div>
 <div class="t gt" style="left:268px;top:414px">Смещение по горизонтали</div>
</div>

<div class="a" style="left:621px;top:556px;width:529px;height:2px;background:linear-gradient(180deg,#a07878 0 1px,#7a4a38 1px)"></div>
</body></html>
